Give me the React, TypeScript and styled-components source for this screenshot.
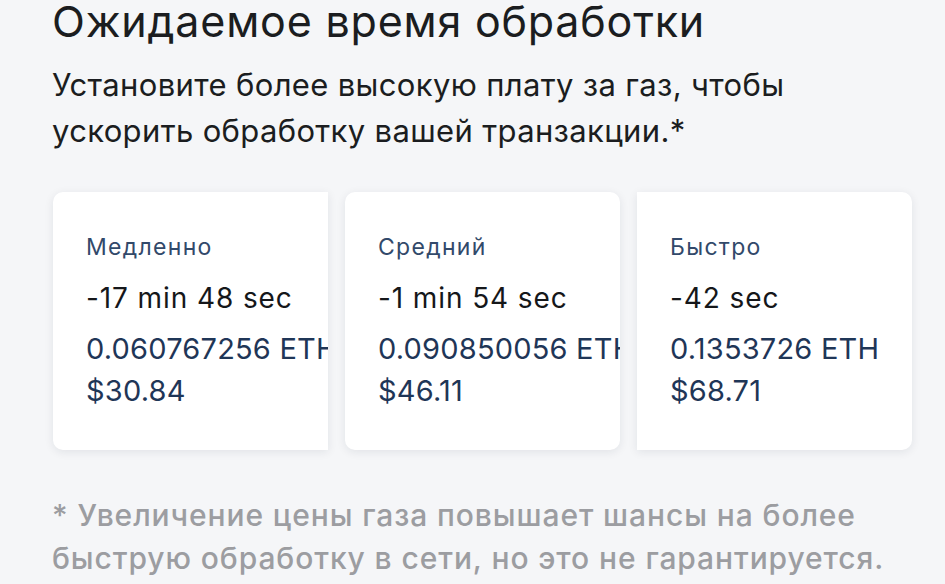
import React from "react";
import styled, { createGlobalStyle } from "styled-components";

const Global = createGlobalStyle`
  html, body {
    margin: 0;
    padding: 0;
    background: #f5f6f8;
  }
  body {
    font-family: Inter, "Noto Sans", "DejaVu Sans", sans-serif;
    -webkit-font-smoothing: antialiased;
  }
`;

const Page = styled.div`
  width: 945px;
  height: 584px;
  overflow: hidden;
  padding-left: 52px;
  box-sizing: border-box;
  background: #f5f6f8;
`;

const Heading = styled.h1`
  margin: 0;
  font-size: 43px;
  line-height: 1;
  font-weight: 400;
  color: #1b1d20;
  letter-spacing: 0.8px;
  white-space: nowrap;
`;

const Lead = styled.p`
  margin: 19px 0 0;
  font-size: 31px;
  line-height: 46px;
  font-weight: 400;
  color: #1b1d20;
  letter-spacing: 0.35px;
  white-space: nowrap;
`;

const Cards = styled.div`
  display: flex;
  gap: 17px;
  margin: 38px 0 0 1px;
`;

type Corners = "left" | "both" | "right";

const Card = styled.div<{ $corners: Corners }>`
  width: 275px;
  height: 258px;
  box-sizing: border-box;
  padding: 42px 0 0 33px;
  background: #ffffff;
  border-radius: ${(p) =>
    p.$corners === "left"
      ? "10px 0 0 10px"
      : p.$corners === "right"
      ? "0 10px 10px 0"
      : "10px"};
  box-shadow: 0 2px 10px rgba(20, 30, 50, 0.09);
  overflow: hidden;
  white-space: nowrap;
  display: flex;
  flex-direction: column;
`;

const Speed = styled.div`
  font-size: 23px;
  line-height: 1.2;
  letter-spacing: 1.3px;
  color: #32496a;
`;

const Time = styled.div`
  margin-top: 20px;
  font-size: 28px;
  line-height: 1.2;
  letter-spacing: 0.9px;
  color: #15171a;
`;

const Amount = styled.div<{ $gap: number }>`
  margin-top: ${(p) => p.$gap}px;
  font-size: 29px;
  line-height: 1.2;
  letter-spacing: 0.2px;
  color: #1f3657;
`;

const Note = styled.p`
  margin: 44px 0 0;
  font-size: 30px;
  line-height: 43px;
  font-weight: 500;
  letter-spacing: 0.9px;
  color: #9c9da1;
  white-space: nowrap;
`;

const options: { speed: string; time: string; eth: string; usd: string; corners: Corners }[] = [
  { speed: "Медленно", time: "-17 min 48 sec", eth: "0.060767256 ETH", usd: "$30.84", corners: "left" },
  { speed: "Средний", time: "-1 min 54 sec", eth: "0.090850056 ETH", usd: "$46.11", corners: "both" },
  { speed: "Быстро", time: "-42 sec", eth: "0.1353726 ETH", usd: "$68.71", corners: "right" },
];

export default function App() {
  return (
    <Page>
      <Global />
      <Heading>Ожидаемое время обработки</Heading>
      <Lead>
        Установите более высокую плату за газ, чтобы
        <br />
        ускорить обработку вашей транзакции.*
      </Lead>
      <Cards>
        {options.map((o) => (
          <Card key={o.speed} $corners={o.corners}>
            <Speed>{o.speed}</Speed>
            <Time>{o.time}</Time>
            <Amount $gap={17}>{o.eth}</Amount>
            <Amount $gap={7}>{o.usd}</Amount>
          </Card>
        ))}
      </Cards>
      <Note>
        * Увеличение цены газа повышает шансы на более
        <br />
        быструю обработку в сети, но это не гарантируется.
      </Note>
    </Page>
  );
}
